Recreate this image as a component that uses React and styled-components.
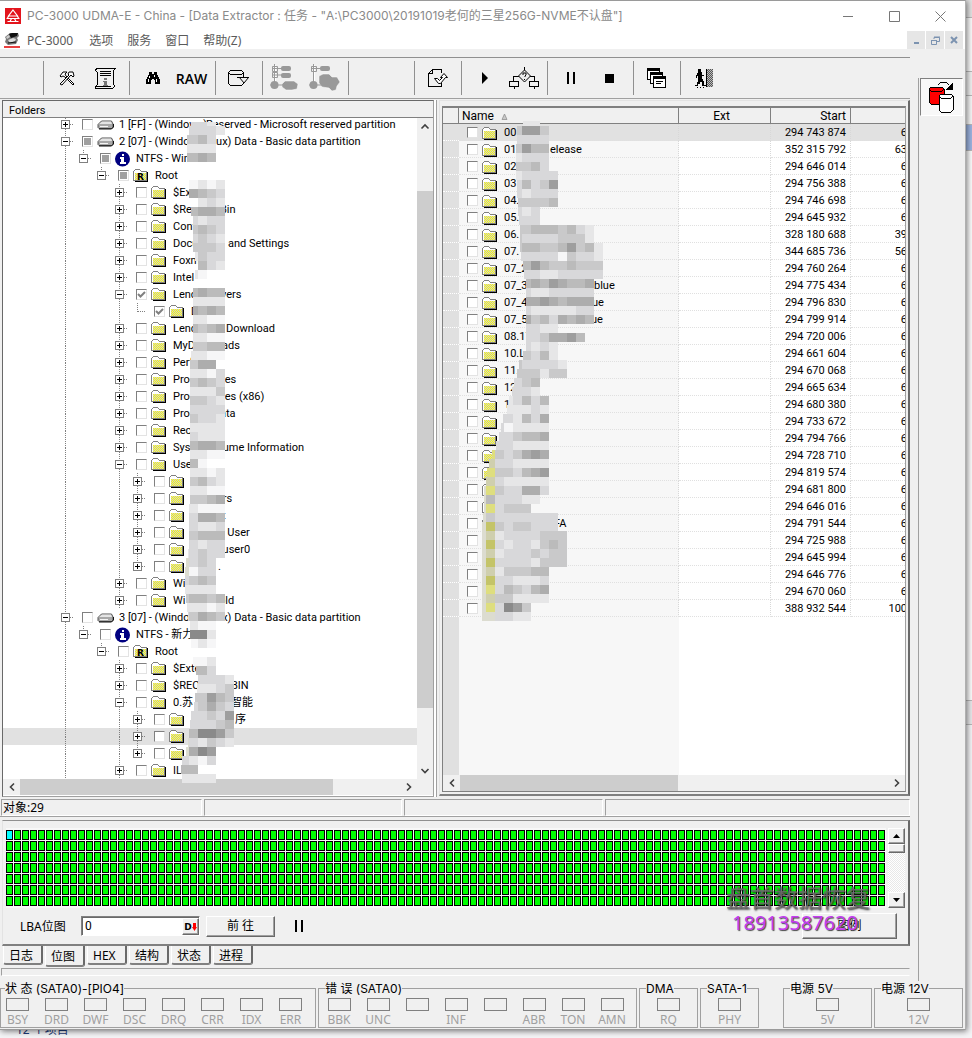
import React from 'react';
import styled, { createGlobalStyle, css } from 'styled-components';

const compact = 'Roboto, "Liberation Sans", "Noto Sans CJK SC", sans-serif';
const ui = '"Noto Sans", "Open Sans", "Noto Sans CJK SC", sans-serif';
const caption = 'Inter, "Open Sans", "Noto Sans CJK SC", sans-serif';

const GlobalStyle = createGlobalStyle`
  * {
    box-sizing: border-box;
  }

  body {
    margin: 0;
    background: #f4f4f6;
    font-family: ${ui};
    font-size: 12px;
    color: #000;
    overflow: hidden;
  }

  button {
    padding: 0;
    border: 0;
    background: none;
    font: inherit;
    color: inherit;
  }

  svg {
    display: block;
    flex-shrink: 0;
  }
`;

/* ---------- window frame ---------- */

const Desktop = styled.div`
  display: grid;
  grid-template-columns: 1fr 6px;
`;

const Window = styled.main`
  display: flex;
  flex-direction: column;
  min-width: 0;
  background: #f0f0f0;
  border-top: 1px solid #9a9a9a;
  border-right: 1px solid #b0b0b0;
  border-bottom: 1px solid #9a9a9a;
  box-shadow: 1px 1px 6px rgba(0, 0, 0, 0.55);
  position: relative;
`;

const Behind = styled.div`
  display: flex;
  flex-direction: column;
`;

const BehindPart = styled.div`
  height: ${(p) => p.$h}px;
  background: ${(p) => p.$color};
  border-bottom: 1px solid #b8b8b8;
`;

const BehindStatus = styled.div`
  grid-column: 1 / 3;
  display: flex;
  align-items: flex-end;
  height: 8px;
  padding-left: 16px;
  overflow: hidden;
  color: #1e3c78;
  line-height: 16px;
`;

const TitleBar = styled.header`
  display: flex;
  align-items: center;
  height: 30px;
  padding: 0 2px 0 5px;
  background: #fff;
  color: #8a8a8a;
`;

const Title = styled.h1`
  flex: 1;
  min-width: 0;
  margin: 0 0 0 6px;
  overflow: hidden;
  font-family: ${caption};
  font-size: 12px;
  font-weight: 400;
  line-height: 18px;
  white-space: nowrap;
`;

const CaptionButton = styled.button`
  display: grid;
  place-items: center;
  width: 46px;
  height: 28px;
`;

const MenuBar = styled.nav`
  display: flex;
  align-items: center;
  gap: 14px;
  height: 18px;
  padding-left: 4px;
  background: #fff;
  color: #5a5a5a;
`;

const AppMenu = styled.div`
  display: flex;
  align-items: center;
  gap: 7px;
  padding-right: 2px;
`;

const MenuItem = styled.button`
  padding-top: 1px;
  line-height: 18px;
`;

const MdiButtons = styled.div`
  display: flex;
  gap: 1px;
  margin-left: auto;
  padding-right: 2px;
`;

const MdiButton = styled.button`
  display: grid;
  place-items: center;
  width: 18px;
  height: 18px;
  background: #e6e6e6;
`;

const Body = styled.div`
  display: flex;
`;

const Main = styled.div`
  flex: 1;
  min-width: 0;
  padding-top: 8px;
`;

const Side = styled.aside`
  width: 55px;
  padding: 29px 2px 0 8px;
`;

const SideBar = styled.div`
  height: 100%;
  padding-left: 1px;
  border-left: 1px solid #a0a0a0;
`;

const SideButton = styled.button`
  display: grid;
  place-items: center;
  width: 43px;
  height: 38px;
  border: 1px solid;
  border-color: #808080 #fff #fff #808080;
  background: #f8f8f8;
`;

/* ---------- toolbar ---------- */

const Toolbar = styled.div`
  display: flex;
  align-items: stretch;
  height: 42px;
  padding: 3px 0;
  border-top: 1px solid #909090;
  border-bottom: 1px solid #a0a0a0;
`;

const ToolGroup = styled.div`
  display: flex;
  flex-shrink: 0;
  padding: 0 4px 0 3px;
  min-width: ${(p) => p.$width || 0}px;
  ${(p) =>
    !p.$plain &&
    css`
      border-left: 1px solid #909090;
    `}
`;

const ToolButton = styled.button`
  display: grid;
  place-items: center;
  width: 39px;
  font-family: 'Open Sans', sans-serif;
  font-size: 14px;
  font-weight: 600;
`;

/* ---------- panels ---------- */

const Panels = styled.div`
  display: flex;
  gap: 5px;
  padding: 1px 0 0 2px;
`;

const FolderPanel = styled.section`
  position: relative;
  flex: 1 1 432px;
  min-width: 0;
  border: 1px solid #696969;
  border-right-color: #a0a0a0;
  border-bottom-color: #a0a0a0;
  box-shadow: 2px 0 0 #fff, 3px 0 0 #a0a0a0;
  background: #fff;
  font-family: ${compact};
`;

const PanelTitle = styled.h2`
  height: 17px;
  margin: 0;
  padding: 2px 0 0 6px;
  border-bottom: 1px solid #808080;
  background: #f0f0f0;
  font-size: 11px;
  font-weight: 400;
  line-height: 15px;
`;

const TreeArea = styled.div`
  display: flex;
  overflow: hidden;
`;

const Tree = styled.ul`
  flex: 1;
  min-width: 0;
  margin: -2px 0 0;
  padding: 0;
  list-style: none;
`;

const TreeRow = styled.li`
  display: flex;
  align-items: center;
  height: 17px;
  padding-left: 54px;
  background: ${(p) => (p.$selected ? '#e1e1e1' : 'transparent')};
  white-space: nowrap;
`;

const Expander = styled.button`
  width: 18px;
  height: 17px;
`;

const Check = styled.input`
  appearance: none;
  flex-shrink: 0;
  width: 11px;
  height: 11px;
  margin: 0 4px 0 7px;
  border: 1px solid;
  border-color: #808080 #e3e3e3 #e3e3e3 #808080;
  background: #fff;

  ${(p) =>
    p.$partial &&
    css`
      background: #a0a0a0;
      box-shadow: inset 0 0 0 1px #fff;
    `}
`;

const TickWrap = styled.span`
  position: relative;
  display: flex;

  svg {
    position: absolute;
    left: 8px;
    top: 1px;
    pointer-events: none;
  }
`;

const ItemName = styled.label`
  display: flex;
  margin-left: 5px;
  font-size: 11px;
  line-height: 17px;
  text-align: left;
`;

const Lead = styled.span`
  flex-shrink: 0;
  width: ${(p) => p.$width}px;
  overflow: hidden;
`;

const Track = styled.div`
  display: flex;
  flex-direction: ${(p) => (p.$vertical ? 'column' : 'row')};
  align-items: stretch;
  width: ${(p) => (p.$vertical ? '16px' : 'auto')};
  height: ${(p) => (p.$vertical ? 'auto' : '16px')};
  padding-right: ${(p) => (p.$corner ? 16 : 0)}px;
  background: #f0f0f0;
`;

const Arrow = styled.button`
  display: grid;
  place-items: center;
  flex: 0 0 17px;
`;

const Thumb = styled.div`
  flex: ${(p) => p.$size} 1 0;
  background: #cdcdcd;
`;

const Rest = styled.div`
  flex: ${(p) => p.$size} 1 0;
`;

const MosaicLayer = styled.svg`
  position: absolute;
  left: ${(p) => p.$left}px;
  top: ${(p) => p.$top}px;
  pointer-events: none;
`;

const FilePanel = styled.section`
  position: relative;
  flex: 1 1 471px;
  min-width: 0;
  padding: 5px 2px 2px 2px;
  border: 1px solid #e3e3e3;
  border-right: 2px solid #696969;
  border-bottom: 2px solid #808080;
  margin-bottom: 1px;
  font-family: ${compact};
`;

const FileFrame = styled.div`
  border: 1px solid #808080;
  border-right-color: #a0a0a0;
  border-top-width: 2px;
  overflow: hidden;
  background: #fff;
`;

const FileTable = styled.table`
  width: calc(100% + 2px);
  table-layout: fixed;
  border-collapse: separate;
  border-spacing: 0;
  font-size: 12px;
`;

const HeadCell = styled.th`
  height: 16px;
  padding: 1px ${(p) => (p.$align === 'left' ? 3 : 4)}px 0;
  border-right: 1px solid #808080;
  border-bottom: 1px solid #808080;
  background: #f0f0f0;
  font-weight: 400;
  line-height: 14px;
  text-align: ${(p) => p.$align};

  &:nth-child(3) {
    padding-right: 10px;
  }

  &:last-child {
    border-right: 0;
  }
`;

const SortLabel = styled.span`
  display: flex;
  align-items: center;
  gap: 7px;
`;

const Cell = styled.td`
  height: 17px;
  padding: 1px 4px 0 0;
  border-right: 1px dotted #d8d8d8;
  border-bottom: 1px dotted #e0e0e0;
  font-size: 11px;
  line-height: 15px;
  text-align: right;
  white-space: nowrap;
  overflow: hidden;

  &:first-child {
    background: #e0e0e0;
    border-right: 0;
    border-bottom-color: #fff;
  }

  &:nth-child(2) {
    background: #f7f7f7;
  }

  &:last-child {
    padding-right: 0;
    border-right: 0;
  }
`;

const FileRow = styled.tr`
  ${(p) =>
    p.$selected &&
    css`
      && ${Cell} {
        background: #e1e1e1;
      }
    `}
`;

const FillRow = styled.tr`
  ${Cell} {
    height: 158px;
    border: 0;
  }
`;

const NameLine = styled.div`
  display: flex;
  align-items: center;
  height: 15px;
  padding-left: 1px;

  svg {
    margin-top: 1px;
  }
`;

/* ---------- bottom part ---------- */

const StatusBar = styled.div`
  display: flex;
  gap: 2px;
  margin-top: 2px;
  padding-left: 1px;
  border-bottom: 1px solid #a0a0a0;
`;

const StatusCell = styled.div`
  flex: ${(p) => p.$size} 1 0;
  height: 17px;
  padding-left: 1px;
  border: 1px solid;
  border-color: #a0a0a0 #fff #fff #a0a0a0;
  line-height: 15px;
`;

const MapPanel = styled.section`
  position: relative;
  margin: 3px 0 0 2px;
  padding: 7px 3px 0 3px;
  border: 1px solid #e3e3e3;
  border-top-color: #909090;
  border-right: 2px solid #696969;
  border-bottom: 2px solid #808080;
`;

const MapRow = styled.div`
  display: flex;
  gap: 2px;
`;

const MapArea = styled.div`
  flex: 1;
  min-width: 0;
  padding: 2px 0 1px;
  background: #f8f8f8;
`;

const MapScroll = styled.div`
  display: flex;
  flex-direction: column;
  width: 17px;
  background: repeating-conic-gradient(#fff 0% 25%, #e8e8e8 0% 50%) 0 0 / 2px 2px;
`;

const raised = css`
  border: 1px solid;
  border-color: #fff #696969 #696969 #fff;
  box-shadow: inset -1px -1px 0 #a0a0a0;
  background: #f0f0f0;
`;

const MapScrollButton = styled.button`
  && {
    ${raised}
  }
  display: grid;
  place-items: center;
  height: 16px;
`;

const MapScrollThumb = styled.div`
  ${raised}
  height: 9px;
  margin-bottom: auto;
`;

const Controls = styled.form`
  display: flex;
  align-items: center;
  height: 36px;
  padding: 0 8px 0 14px;
`;

const LbaLabel = styled.label`
  width: 61px;
`;

const LbaField = styled.div`
  display: flex;
  width: 119px;
  height: 20px;
  border: 1px solid;
  border-color: #808080 #fff #fff #808080;
  box-shadow: inset 1px 1px 0 #696969;
  background: #fff;
`;

const LbaInput = styled.input`
  flex: 1;
  min-width: 0;
  padding: 0 0 0 3px;
  border: 0;
  background: none;
  font: 12px ${compact};
`;

const DecButton = styled.button`
  && {
    ${raised}
  }
  display: flex;
  align-items: center;
  justify-content: center;
  width: 17px;
  margin: 1px 0 0;
  font: 700 9px 'DejaVu Sans', sans-serif;
`;

const PushButton = styled.button`
  && {
    ${raised}
  }
  width: ${(p) => p.$width}px;
  height: ${(p) => p.$height}px;
  margin-left: ${(p) => (p.$right ? 'auto' : '6px')};
  line-height: 16px;
`;

const PauseButton = styled.button`
  margin-left: 20px;
`;

const Watermark = styled.div`
  position: absolute;
  right: 36px;
  bottom: 10px;
  width: 146px;
  pointer-events: none;
`;

const WatermarkName = styled.div`
  color: rgba(110, 110, 110, 0.85);
  font-size: 24px;
  line-height: 28px;
  text-shadow: 1px 1px 2px #222;
  white-space: nowrap;
`;

const WatermarkPhone = styled.div`
  padding-left: 6px;
  color: #c43cf0;
  font-size: 20px;
  line-height: 22px;
  text-shadow: 1px 1px 1px #444;
`;

const Tabs = styled.div`
  display: flex;
  align-items: flex-start;
  gap: 2px;
  height: 22px;
  padding-left: 3px;
`;

const Tab = styled.button`
  width: 40px;
  height: ${(p) => (p.$active ? 21 : 19)}px;
  padding: ${(p) => (p.$active ? 2 : 1)}px 6px 0 5px;
  border-left: 1px solid #fff;
  border-right: 2px solid #696969;
  border-bottom: 2px solid #808080;
  border-radius: 0 0 3px 3px;
  background: #f0f0f0;
  line-height: 18px;
  text-align: left;
  white-space: nowrap;

  && {
    border-top: 0;
  }
`;

const TabFoot = styled.div`
  height: 8px;
  margin: 0 0 5px 1px;
  border: 1px solid;
  border-color: #a0a0a0 transparent #fff #a0a0a0;
`;

const Indicators = styled.footer`
  display: flex;
  gap: 2px;
  padding: 0 2px 1px 0;
`;

const Group = styled.fieldset`
  flex: ${(p) => p.$width} 1 ${(p) => p.$width}px;
  min-width: 0;
  margin: 0 0 0 ${(p) => p.$space || 0}px;
  padding: 2px ${(p) => p.$end || 0}px 0 0;
  border: 1px solid #a0a0a0;

  legend {
    margin-left: ${(p) => p.$indent || 6}px;
    padding: 0;
    font-family: ${caption};
    line-height: 15px;
  }
`;

const Lamps = styled.div`
  display: flex;
  justify-content: center;
`;

const Lamp = styled.div`
  display: flex;
  flex: 0 0 39px;
  flex-direction: column;
  align-items: center;
  height: 29px;
  color: #a0a0a0;
  line-height: 16px;

  &:before {
    content: '';
    flex: 0 0 11px;
    width: 21px;
    margin-bottom: 1px;
    border: 1px solid #808080;
  }
`;

/* ---------- icons ---------- */

const Defs = () => (
  <svg width="0" height="0" style={{ position: 'absolute' }} aria-hidden="true">
    <defs>
      <pattern id="dither" width="2" height="2" patternUnits="userSpaceOnUse">
        <rect width="2" height="2" fill="#ffff00" />
        <rect width="1" height="1" fill="#c8c8e0" />
        <rect x="1" y="1" width="1" height="1" fill="#c8c8e0" />
      </pattern>
      <pattern id="grain" width="2" height="2" patternUnits="userSpaceOnUse">
        <rect width="1" height="1" fill="#555" />
        <rect x="1" y="1" width="1" height="1" fill="#555" />
      </pattern>
      <pattern id="sector" width="8" height="11" patternUnits="userSpaceOnUse">
        <rect width="7" height="10" fill="#000" />
        <rect x="1" y="1" width="5" height="8" fill="#00ff00" />
      </pattern>
    </defs>
  </svg>
);

const FolderIcon = ({ root }) => (
  <svg width="17" height="15" viewBox="0 0 17 15" shapeRendering="crispEdges">
    <path d="M2 13h12V4h1v10H2z" fill="#000" />
    <path d="M0 3h1V2h1V1h5v1h1v1h6v10H0z" fill="#808080" />
    <path d="M1 3h1V2h5v1h1v1h5v1H1z" fill="#fff" />
    <rect x="1" y="4" width="12" height="8" fill="url(#dither)" />
    <path d="M1 4h12v1H2v7H1z" fill="#fff" />
    {root && (
      <text x="4" y="12" fontSize="9" fontWeight="700" fontFamily="DejaVu Sans, sans-serif">
        R
      </text>
    )}
  </svg>
);

const DriveIcon = () => (
  <svg width="17" height="13" viewBox="0 0 17 13">
    <path d="M1 6.500L4.500 3h10l1.500 3v3l-1 1.500H2L1 9.500z" fill="#a8a8a8" stroke="#555" />
    <path d="M2 6l3-2.500h9L15 6z" fill="#e4e4e4" />
    <path d="M3 8.500h8" stroke="#f4f4f4" />
    <path d="M2 11h12.500l2-2V6" stroke="#111" fill="none" />
  </svg>
);

const InfoIcon = () => (
  <svg width="16" height="16" viewBox="0 0 16 16">
    <circle cx="7.500" cy="8" r="7.500" fill="#000080" />
    <path d="M7 3h2v2H7zM5 6h4v5h2v2H5v-2h1V8H5z" fill="#fff" />
  </svg>
);

const ArrowIcon = ({ dir }) => {
  const d = {
    up: 'M2.500 7.500L6 4l3.500 3.500',
    down: 'M2.500 4L6 7.500 9.500 4',
    left: 'M8 2.500L4.500 6 8 9.500',
    right: 'M4 2.500L7.500 6 4 9.500',
  }[dir];
  return (
    <svg width="12" height="12" viewBox="0 0 12 12">
      <path d={d} fill="none" stroke="#404040" strokeWidth="1.600" />
    </svg>
  );
};

const Logo = () => (
  <svg width="16" height="16" viewBox="0 0 16 16">
    <rect width="16" height="16" fill="#e3141c" />
    <path d="M8 2l4.500 6h-9zM1.500 10.500h13M4 8l-2 2.500M12 8l2 2.500M2.500 13.500h11M6.500 10.500L5 13.500M9.500 10.500l1.500 3" fill="none" stroke="#fff" strokeWidth="1.200" />
  </svg>
);

const DiskLogo = () => (
  <svg width="16" height="16" viewBox="0 0 16 16">
    <path d="M1 5l5-4h8l1 3-2 2 1 2-2 4-8 1-3-3 1-3z" fill="#777" />
    <path d="M5 2l3-1h6l-1 3-6 2-1-2z" fill="#111" />
    <path d="M2 5l3-2 1 2-3 2z" fill="#ccc" />
    <path d="M4 8l5-2 3 1-1 2-5 2z" fill="#ddd" />
    <path d="M4 11l8-1" stroke="#111" />
    <path d="M0 15h16" stroke="#e00000" strokeWidth="1.500" />
  </svg>
);

const line = { fill: 'none', stroke: '#000', shapeRendering: 'crispEdges' };

const ToolsIcon = () => (
  <svg width="16" height="15" viewBox="0 0 16 15">
    <path d="M1 5l3-4 4 0-2 2 1 2 8 8-1 1-8-8-2-1-2 1z" fill="#fff" stroke="#000" />
    <path d="M10 1l4 0 1 4-1 1-2-2-1 1-8 9-2-1 9-9-1-1z" fill="#fff" stroke="#000" />
  </svg>
);

const ScrollIcon = () => (
  <svg width="23" height="23" viewBox="0 0 23 23">
    <path {...line} d="M3.500 1.500h18l-2 2v13l1 3-2 2h-17v-2l2-2v-12l-2-2v-1zM6 4.500h11M6 6.500h11M6 8.500h11M2 19.500h15" />
    <path d="M10 11h3v2h-3zM9 14h4v4h1v1H9v-1h1v-3H9z" fill="#777" />
  </svg>
);

const BinocularsIcon = () => (
  <svg width="16" height="14" viewBox="0 0 16 14" shapeRendering="crispEdges">
    <path d="M4 1h3v2h2V1h3v2l1 2 2 4v4h-5V9H9V8H7v1H6v4H1V9l2-4 1-2z" />
    <path d="M4 5h1v2H4zM3 8h1v3H3zM9 4h1v2H9zM11 8h1v3h-1z" fill="#fff" />
  </svg>
);

const CylinderIcon = () => (
  <svg width="23" height="18" viewBox="0 0 23 18">
    <path {...line} d="M16.500 8V3.500l-2-2h-11l-2 2v11l2 2h11l2-2M1.500 3.500l2 2h11l2-2M10 8.500h3M19 8.500h3" />
    <path d="M12.500 8.500h9L17 14z" fill="#f0f0f0" stroke="#000" />
  </svg>
);

const TreeMapIcon = ({ blob }) => (
  <svg width="34" height="28" viewBox="0 0 34 28">
    <path d="M6.500 1v20" stroke="#fff" />
    <path d="M5.500 0v20M3 4.500h11M3.500 7.500h5v-5h-5z" stroke="#999" fill="none" />
    <rect x="12" y="2" width="10" height="5" rx="2" fill="#999" />
    {!blob && <path d="M3.500 13.500h5v-5h-5zM3 11h11" stroke="#999" fill="none" />}
    {!blob && <rect x="12" y="9" width="10" height="5" rx="2" fill="#999" />}
    {!blob && <path d="M13 20l3-3h9l4 3-1 5-5 1h-6l-4-3z" fill="#999" stroke="#fff" strokeWidth="0.500" />}
    {blob && <path d="M11 12l4-2 6 0 3 3 5 0 3 5-3 4-1 4-4 1-3-3-7-1-3-4z" fill="#999" stroke="#fff" strokeWidth="0.500" />}
    <path d="M1 21h14" stroke="#999" />
    <circle cx="5.500" cy="21" r="4" fill="#999" />
  </svg>
);

const ExportIcon = () => (
  <svg width="21" height="20" viewBox="0 0 21 20">
    <path {...line} d="M14.500 5V1.500h-9l-4 4v13h13V15M5.500 1.500v4h-4" />
    <path d="M7.500 10.500h3l2 2 3-3h-2l3.500-4 3.500 4h-2l-5 6h-2z" fill="#fff" stroke="#000" />
  </svg>
);

const FlowIcon = () => (
  <svg width="32" height="22" viewBox="0 0 32 22">
    <path {...line} d="M16.500 0v3M12 9.500H5.500V15M20 9.500h6.500V15M1.500 14.500h9v5h-9zM21.500 14.500h9v5h-9zM6.500 20v2M26.500 20v2" />
    <path d="M16.500 3l6 6-6 6-6-6z" fill="#eee" stroke="#000" />
    <path d="M15 8V6h3v2l-1 1v1M16.500 12v1" fill="none" stroke="#000" />
  </svg>
);

const WindowsIcon = () => (
  <svg width="20" height="21" viewBox="0 0 20 21" shapeRendering="crispEdges">
    {[0, 1, 2].map((n) => (
      <g key={n} transform={`translate(${n * 3} ${n * 4})`}>
        <path d="M.5 .5h12v11H.5z" fill="#fff" stroke="#000" />
        <path d="M1 1.500h11" stroke="#000" strokeWidth="2" />
        <path d="M3 5.500h7M3 7.500h5" stroke="#000" />
      </g>
    ))}
  </svg>
);

const ExitIcon = () => (
  <svg width="20" height="19" viewBox="0 0 20 19" shapeRendering="crispEdges">
    <path d="M4 0h3v3h1v3h2v1h-2v3h1v2h1v4h2v1h-4v-4H6v2H4v2H1v-1h2v-3h1V7H3v2H2V6h1V4h1z" />
    <path d="M3 18h1M6 18h1M9 18h1" stroke="#000" />
    <rect x="13" width="6" height="18" fill="#bbb" />
    <rect x="13" width="6" height="18" fill="url(#grain)" />
    <path d="M12.500 0v18" stroke="#000" />
  </svg>
);

const CopyDiskIcon = () => (
  <svg width="27" height="33" viewBox="0 0 27 33" shapeRendering="crispEdges">
    <path d="M1 8l2-2h11l2 2v13l-2 2H3l-2-2z" fill="#f00" stroke="#000" />
    <path d="M1 8l2 2h11l2-2" fill="none" stroke="#000" />
    <path d="M11 15l2-2h10l2 2v14l-2 2H13l-2-2z" fill="#fff" stroke="#000" />
    <path d="M11 15l2 2h10l2-2" fill="none" stroke="#000" />
    <path d="M10 4l3-3h5l3 3" fill="none" stroke="#000" />
    <path d="M25 1v8h-8z" />
  </svg>
);

const PauseIcon = () => (
  <svg width="8" height="12" viewBox="0 0 8 12">
    <path d="M0 0h2v12H0zM6 0h2v12H6z" />
  </svg>
);

const Tick = () => (
  <svg width="9" height="9" viewBox="0 0 9 9">
    <path d="M1 4l2.500 2.500L8 2" fill="none" stroke="#808080" strokeWidth="2" />
  </svg>
);

const Branch = ({ sign, top, bottom }) => (
  <svg width="18" height="17" viewBox="0 0 18 17" shapeRendering="crispEdges">
    <g stroke="#808080" fill="none" strokeDasharray="1 1">
      {top && <path d="M8.500 0v9" />}
      {bottom && <path d="M8.500 9v8" />}
      {sign && <path d="M9 8.500h8" />}
    </g>
    {(sign === '+' || sign === '-') && <rect x="4.500" y="4.500" width="8" height="8" fill="#fff" stroke="#808080" />}
    {(sign === '+' || sign === '-') && <path d="M6 8.500h5" stroke="#000" />}
    {sign === '+' && <path d="M8.500 6v5" stroke="#000" />}
  </svg>
);

/* ---------- data ---------- */

// level, sign, visible start, [offset of visible end, visible end], extra flags
const tree = [
  [0, '+', '1 [FF] - (Windows)', 87, 'Reserved - Microsoft reserved partition'],
  [0, '-', '2 [07] - (Windo', 91, 'nux) Data - Basic data partition', { check: 'partial' }],
  [1, '-', 'NTFS - Win', 0, '', { check: 'partial' }],
  [2, '-', 'Root', 0, '', { check: 'partial' }],
  [3, '+', '$Ext'],
  [3, '+', '$Rec', 47, 'Bin'],
  [3, '+', 'Conf'],
  [3, '+', 'Docu', 55, 'and Settings'],
  [3, '+', 'Foxm'],
  [3, '+', 'Intel'],
  [3, '-', 'Lenc', 48, 'vers', { check: 'on' }],
  [4, 'end', 'D', 0, '', { check: 'on' }],
  [3, '+', 'Lenc', 53, 'Download'],
  [3, '+', 'MyD', 49, 'ads'],
  [3, '+', 'Perf'],
  [3, '+', 'Prog', 49, 'les'],
  [3, '+', 'Prog', 49, 'les (x86)'],
  [3, '+', 'Prog', 47, 'ata'],
  [3, '+', 'Rec'],
  [3, '+', 'Syst', 47, 'lume Information'],
  [3, '-', 'Use'],
  [4, '+', ''],
  [4, '+', '', 26, 'ers'],
  [4, '+', '', 31, 't'],
  [4, '+', '', 30, 't User'],
  [4, '+', '', 28, 'tuser0'],
  [4, '+', '', 27, '.', { last: true }],
  [3, '+', 'Wi'],
  [3, '+', 'Wi', 46, 'old'],
  [0, '-', '3 [07] - (Windo', 91, 'nux) Data - Basic data partition'],
  [1, '-', 'NTFS - 新力'],
  [2, '-', 'Root'],
  [3, '+', '$Exte'],
  [3, '+', '$REC', 58, 'BIN'],
  [3, '-', '0.苏', 58, '智能'],
  [4, '+', '', 44, '序'],
  [4, '+', '', 0, '', { selected: true }],
  [4, '+', '', 0, '', { last: true }],
  [3, '+', 'IL'],
];

const files = [
  ['00', 0, '', '294 743 874', '6'],
  ['01', 46, 'elease', '352 315 792', '63'],
  ['02', 0, '', '294 646 014', '6'],
  ['03', 0, '', '294 756 388', '6'],
  ['04.', 0, '', '294 746 698', '6'],
  ['05.', 0, '', '294 645 932', '6'],
  ['06.', 0, '', '328 180 688', '39'],
  ['07.', 0, '', '344 685 736', '56'],
  ['07_2', 92, 'e', '294 760 264', '6'],
  ['07_3', 90, 'blue', '294 775 434', '6'],
  ['07_4', 88, 'ue', '294 796 830', '6'],
  ['07_5', 87, 'ue', '294 799 914', '6'],
  ['08.17', 0, '', '294 720 006', '6'],
  ['10.L', 0, '', '294 661 604', '6'],
  ['11.', 0, '', '294 670 068', '6'],
  ['12', 0, '', '294 665 634', '6'],
  ['1', 0, '', '294 680 380', '6'],
  ['', 0, '', '294 733 672', '6'],
  ['', 0, '', '294 794 766', '6'],
  ['', 0, '', '294 728 710', '6'],
  ['', 14, '1', '294 819 574', '6'],
  ['', 14, '.', '294 681 800', '6'],
  ['', 0, '', '294 646 016', '6'],
  ['', 50, 'FA', '294 791 544', '6'],
  ['', 0, '', '294 725 988', '6'],
  ['', 0, '', '294 645 994', '6'],
  ['', 0, '', '294 646 776', '6'],
  ['', 0, '', '294 670 060', '6'],
  ['', 16, 'y', '388 932 544', '100'],
];

// pixelated strips: y, start x, shade of every 9px cell
const treeMosaic = [
  [122, 191, 'dde'], [126, 189, 'ddde'], [135, 187, 'ccbd'], [144, 187, 'eeee'], [153, 187, 'bbab'],
  [180, 189, 'fefe'], [189, 189, 'abcd'], [198, 198, 'ede'], [207, 191, 'baab'], [216, 193, 'dedd'],
  [225, 193, 'cbcd'], [234, 193, 'dcde'], [243, 193, 'cccd'], [252, 195, 'ecdd'], [261, 198, 'bde'], [270, 195, 'ef'],
  [288, 193, 'babb'], [297, 193, 'eeee'], [306, 193, 'abab'], [315, 193, 'eeff'], [324, 193, 'bcba'],
  [333, 193, 'eeff'], [342, 193, 'ccbb'], [351, 191, 'eeff'], [360, 190, 'caa'], [369, 190, 'eefd'],
  [378, 190, 'cbcd'], [387, 190, 'eeec'], [396, 190, 'ccde'], [405, 190, 'dddd'], [414, 190, 'cdde'],
  [423, 190, 'eeee'], [432, 190, 'deee'], [441, 190, 'baab'], [450, 190, 'eeff'], [459, 190, 'bf'],
  [468, 190, 'eefe'], [477, 190, 'cbde'], [486, 190, 'eeff'], [495, 190, 'ccba'], [504, 189, 'efff'],
  [513, 189, 'daab'], [522, 189, 'deed'], [531, 189, 'cbbb'], [540, 189, 'dedd'], [549, 188, 'edcdd'],
  [558, 186, 'gdcd'], [567, 185, 'gfdd'], [576, 185, 'dcbc'], [585, 185, 'eeee'], [594, 186, 'cbbcb'],
  [603, 187, 'eeefe'], [612, 188, 'dcabc'], [621, 190, 'eff'], [630, 190, '88e'], [639, 191, 'fef'],
  [657, 193, 'ffe'], [666, 196, 'bbd'], [675, 198, 'ddde'], [684, 197, 'eeedc'], [693, 195, 'cc9bc'],
  [702, 194, 'dcacd'], [711, 191, 'ddcd9'], [720, 190, 'dddcb'], [729, 189, 'b889c'], [738, 188, 'gdecde'],
  [747, 186, 'ga89'], [756, 182, 'defd'], [765, 181, 'bb'], [774, 182, 'eeee'],
];

const fileMosaic = [
  [121, 523, 'ee'], [126, 517, 'c99c'], [135, 517, 'dddd'], [144, 516, 'c9bb'], [153, 516, 'eddd'],
  [162, 516, 'ccbd'], [171, 516, 'edddd'], [180, 517, 'dbdc9'], [189, 517, 'deddd'], [198, 518, 'ccccb'],
  [207, 518, 'ded'], [216, 519, 'ddd'], [225, 520, 'ccbbbcbde'], [234, 520, 'cddddccce'], [243, 520, 'cbbccb9cbe'],
  [252, 521, 'dddddfcdde'], [261, 523, 'b9bccbccc'], [270, 524, 'ddeeddddd'], [279, 526, 'bab9abba'],
  [288, 526, 'deeddddd'], [297, 526, 'aa9abaaa'], [306, 526, 'deeeeedd'], [315, 526, 'acbdabab'],
  [324, 526, 'ddee'], [333, 526, 'ddcaa9b'], [342, 526, 'dede'], [351, 523, 'cdbe'], [360, 519, 'cdddde'],
  [369, 517, 'cccecc'], [378, 514, 'dcb'], [387, 512, 'ddde'], [396, 509, 'edbdb'], [405, 507, 'eeede'],
  [414, 503, 'ddebda'], [423, 501, 'dfeeee'], [432, 499, 'ddcbba'], [441, 496, 'ddeeee'], [450, 492, 'ycdca9a'],
  [459, 489, 'oddeeee'], [468, 487, 'yccdba9'], [477, 486, 'odeeeee'], [486, 484, 'gycddaad'], [495, 484, 'gbdddee'],
  [504, 484, 'gydccc'], [513, 483, 'gcddddddd'], [522, 482, 'gkcdccddd'], [531, 482, 'goeddddccc'],
  [540, 482, 'gkdeddecbc'], [549, 482, 'goedddcdcc'], [558, 482, 'gkddddeccc'], [567, 482, 'goecccbb'],
  [576, 482, 'gkddeeed'], [585, 482, 'gydbcdba'], [594, 482, 'gocceeee'], [603, 482, 'gyd89c'], [612, 482, 'ggddee'],
];

const shades = {
  8: '#8a8a8a', 9: '#9e9e9e', a: '#adadad', b: '#bbbbbb', c: '#c9c9ca', d: '#d8d8da', e: '#e6e6e7', f: '#f6f6f7',
  y: '#dede7e', o: '#cfcfae', k: '#c4c468', g: '#dcdcd0',
};

const Mosaic = ({ rows, left, top, ...rest }) => (
  <MosaicLayer width="140" height="700" shapeRendering="crispEdges" {...rest}>
    {rows.map(([y, x, cells]) =>
      cells.split('').map((c, i) => {
        const x1 = i === 0 ? x : (Math.floor(x / 9) + i) * 9;
        const x2 = (Math.floor(x / 9) + i + 1) * 9;
        const y2 = (Math.floor(y / 9) + 1) * 9;
        return <rect key={`${y}-${i}`} x={x1 - left} y={y - top} width={x2 - x1} height={y2 - y} fill={shades[c]} />;
      })
    )}
  </MosaicLayer>
);

const rowIcon = (level) => {
  if (level === 0) return <DriveIcon />;
  if (level === 1) return <InfoIcon />;
  return <FolderIcon root={level === 2} />;
};

const PartialName = ({ id, start, at, end }) => (
  <ItemName htmlFor={id}>
    {at ? <Lead $width={at}>{start}</Lead> : start}
    {end}
  </ItemName>
);

const ScrollBar = ({ vertical, corner, before, thumb, after }) => (
  <Track $vertical={vertical} $corner={corner}>
    <Arrow aria-label={vertical ? 'Up' : 'Left'}>
      <ArrowIcon dir={vertical ? 'up' : 'left'} />
    </Arrow>
    <Rest $size={before} />
    <Thumb $size={thumb} />
    <Rest $size={after} />
    <Arrow aria-label={vertical ? 'Down' : 'Right'}>
      <ArrowIcon dir={vertical ? 'down' : 'right'} />
    </Arrow>
  </Track>
);

const FolderTree = () => (
  <FolderPanel>
    <PanelTitle>Folders</PanelTitle>
    <TreeArea>
      <Tree>
        {tree.map(([level, sign, start, at, end, extra = {}], i) => (
          <TreeRow key={i} $selected={extra.selected}>
            {Array.from({ length: level }, (_, l) => (
              <Branch key={l} top={l === 0 || l === 3} bottom={l === 0 || l === 3} />
            ))}
            {sign === 'end' ? (
              <Branch sign="end" top />
            ) : (
              <Expander aria-label="Toggle">
                <Branch sign={sign} top bottom={level !== 1 && level !== 2 && !extra.last} />
              </Expander>
            )}
            <TickWrap>
              <Check
                type="checkbox"
                id={`folder-${i}`}
                aria-label={start || 'Folder'}
                defaultChecked={extra.check === 'on'}
                $partial={extra.check === 'partial'}
              />
              {extra.check === 'on' && <Tick />}
            </TickWrap>
            {rowIcon(level)}
            <PartialName id={`folder-${i}`} start={start} at={at} end={end} />
          </TreeRow>
        ))}
      </Tree>
      <ScrollBar vertical before={56} thumb={516} after={54} />
    </TreeArea>
    <ScrollBar corner before={0} thumb={312} after={67} />
    <Mosaic rows={treeMosaic} left={180} top={110} $left={177} $top={9} />
  </FolderPanel>
);

const FileList = () => (
  <FilePanel>
    <FileFrame>
      <FileTable>
        <colgroup>
          <col style={{ width: 16 }} />
          <col />
          <col style={{ width: 92 }} />
          <col style={{ width: 80 }} />
          <col style={{ width: 56 }} />
        </colgroup>
        <thead>
          <tr>
            <HeadCell aria-label="Row" />
            <HeadCell $align="left">
              <SortLabel>
                Name
                <svg width="7" height="7" viewBox="0 0 7 7">
                  <path d="M3.500 1L6 6.500H1z" fill="#c8c8c8" stroke="#909090" strokeWidth="0.800" />
                </svg>
              </SortLabel>
            </HeadCell>
            <HeadCell $align="center">Ext</HeadCell>
            <HeadCell $align="right">Start</HeadCell>
            <HeadCell aria-label="Size" />
          </tr>
        </thead>
        <tbody>
          {files.map(([start, at, end, lba, size], i) => (
            <FileRow key={lba} $selected={i === 0}>
              <Cell />
              <Cell>
                <NameLine>
                  <Check type="checkbox" id={`file-${i}`} aria-label={start || 'File'} />
                  <FolderIcon />
                  <PartialName id={`file-${i}`} start={start} at={at} end={end} />
                </NameLine>
              </Cell>
              <Cell />
              <Cell>{lba}</Cell>
              <Cell>{size}</Cell>
            </FileRow>
          ))}
          <FillRow>
            <Cell />
            <Cell />
            <Cell />
            <Cell />
            <Cell />
          </FillRow>
        </tbody>
      </FileTable>
      <ScrollBar before={0} thumb={218} after={210} />
    </FileFrame>
    <Mosaic rows={fileMosaic} left={480} top={110} $left={40} $top={9} />
  </FilePanel>
);

const SectorMap = () => (
  <MapPanel>
    <MapRow>
      <MapArea>
        <svg width="100%" height="77">
          <rect width="100%" height="77" fill="url(#sector)" />
          <rect x="1" y="1" width="5" height="8" fill="#00ffff" />
        </svg>
      </MapArea>
      <MapScroll>
        <MapScrollButton aria-label="Up">
          <svg width="7" height="4" viewBox="0 0 7 4">
            <path d="M3.500 0L7 4H0z" />
          </svg>
        </MapScrollButton>
        <MapScrollThumb />
        <MapScrollButton aria-label="Down">
          <svg width="7" height="4" viewBox="0 0 7 4">
            <path d="M0 0h7L3.500 4z" />
          </svg>
        </MapScrollButton>
      </MapScroll>
    </MapRow>
    <Controls onSubmit={(e) => e.preventDefault()}>
      <LbaLabel htmlFor="lba">LBA位图</LbaLabel>
      <LbaField>
        <LbaInput id="lba" defaultValue="0" />
        <DecButton type="button">
          D
          <svg width="5" height="8" viewBox="0 0 5 8">
            <path d="M1 0h3v4h1L2.500 8 0 4h1z" fill="#f00" />
          </svg>
        </DecButton>
      </LbaField>
      <PushButton $width={69} $height={21}>
        前 往
      </PushButton>
      <PauseButton type="button" aria-label="Pause">
        <PauseIcon />
      </PauseButton>
      <PushButton type="button" $width={95} $height={26} $right>
        图例
      </PushButton>
    </Controls>
    <Watermark>
      <WatermarkName>盘首数据恢复</WatermarkName>
      <WatermarkPhone>18913587620</WatermarkPhone>
    </Watermark>
  </MapPanel>
);

const lampGroups = [
  { title: '状 态 (SATA0)-[PIO4]', lamps: ['BSY', 'DRD', 'DWF', 'DSC', 'DRQ', 'CRR', 'IDX', 'ERR'], width: 316, indent: 4, end: 8 },
  { title: '错 误 (SATA0)', lamps: ['BBK', 'UNC', '', 'INF', '', 'ABR', 'TON', 'AMN'], width: 319, end: 4 },
  { title: 'DMA', lamps: ['RQ'], width: 59 },
  { title: 'SATA-1', lamps: ['PHY'], width: 59 },
  { title: '电源 5V', lamps: ['5V'], width: 89, space: 22 },
  { title: '电源 12V', lamps: ['12V'], width: 89 },
];

const App = () => (
  <>
    <GlobalStyle />
    <Defs />
    <Desktop>
      <Window>
        <TitleBar>
          <Logo />
          <Title>PC-3000 UDMA-E - China - [Data Extractor : 任务 - "A:\PC3000\20191019老何的三星256G-NVME不认盘"]</Title>
          <CaptionButton aria-label="Minimize">
            <svg width="10" height="10" viewBox="0 0 10 10">
              <path d="M0 5.500h10" stroke="#777" />
            </svg>
          </CaptionButton>
          <CaptionButton aria-label="Maximize">
            <svg width="11" height="11" viewBox="0 0 11 11">
              <path d="M.5 .5h10v10H.5z" fill="none" stroke="#777" />
            </svg>
          </CaptionButton>
          <CaptionButton aria-label="Close">
            <svg width="11" height="11" viewBox="0 0 11 11">
              <path d="M.5 .5l10 10M10.500 .5l-10 10" stroke="#777" />
            </svg>
          </CaptionButton>
        </TitleBar>
        <MenuBar>
          <AppMenu>
            <DiskLogo />
            <MenuItem>PC-3000</MenuItem>
          </AppMenu>
          <MenuItem>选项</MenuItem>
          <MenuItem>服务</MenuItem>
          <MenuItem>窗口</MenuItem>
          <MenuItem>帮助(Z)</MenuItem>
          <MdiButtons>
            <MdiButton aria-label="Minimize document">
              <svg width="9" height="9" viewBox="0 0 9 9">
                <path d="M2 7h5" stroke="#7c93b0" strokeWidth="2" />
              </svg>
            </MdiButton>
            <MdiButton aria-label="Restore document">
              <svg width="9" height="9" viewBox="0 0 9 9">
                <path d="M3 3V1.500h5.500v4H6M.5 4.500h5v4h-5zM3 1h6M0 4.500h6" fill="none" stroke="#7c93b0" />
              </svg>
            </MdiButton>
            <MdiButton aria-label="Close document">
              <svg width="8" height="8" viewBox="0 0 8 8">
                <path d="M1 1l6 6M7 1L1 7" stroke="#7c93b0" strokeWidth="2" />
              </svg>
            </MdiButton>
          </MdiButtons>
        </MenuBar>
        <Body>
          <Main>
            <Toolbar>
              <ToolGroup $plain $width={43} />
              <ToolGroup>
                <ToolButton aria-label="Tools"><ToolsIcon /></ToolButton>
                <ToolButton aria-label="Report"><ScrollIcon /></ToolButton>
              </ToolGroup>
              <ToolGroup>
                <ToolButton aria-label="Find"><BinocularsIcon /></ToolButton>
                <ToolButton>RAW</ToolButton>
              </ToolGroup>
              <ToolGroup>
                <ToolButton aria-label="Partition"><CylinderIcon /></ToolButton>
              </ToolGroup>
              <ToolGroup>
                <ToolButton aria-label="Tree map"><TreeMapIcon /></ToolButton>
                <ToolButton aria-label="Object map"><TreeMapIcon blob /></ToolButton>
              </ToolGroup>
              <ToolGroup $width={66} />
              <ToolGroup>
                <ToolButton aria-label="Export"><ExportIcon /></ToolButton>
              </ToolGroup>
              <ToolGroup>
                <ToolButton aria-label="Start">
                  <svg width="8" height="12" viewBox="0 0 8 12">
                    <path d="M1 0l6 6-6 6z" />
                  </svg>
                </ToolButton>
                <ToolButton aria-label="Steps"><FlowIcon /></ToolButton>
              </ToolGroup>
              <ToolGroup>
                <ToolButton aria-label="Pause task"><PauseIcon /></ToolButton>
                <ToolButton aria-label="Stop">
                  <svg width="9" height="9" viewBox="0 0 9 9">
                    <rect width="9" height="9" />
                  </svg>
                </ToolButton>
              </ToolGroup>
              <ToolGroup>
                <ToolButton aria-label="Windows"><WindowsIcon /></ToolButton>
              </ToolGroup>
              <ToolGroup>
                <ToolButton aria-label="Exit"><ExitIcon /></ToolButton>
              </ToolGroup>
            </Toolbar>
            <Panels>
              <FolderTree />
              <FileList />
            </Panels>
            <StatusBar>
              <StatusCell $size={200}>对象:29</StatusCell>
              <StatusCell $size={198}></StatusCell>
              <StatusCell $size={198}></StatusCell>
              <StatusCell $size={306}></StatusCell>
            </StatusBar>
            <SectorMap />
            <Tabs role="tablist">
              {['日志', '位图', 'HEX', '结构', '状态', '进程'].map((name) => (
                <Tab key={name} role="tab" aria-selected={name === '位图'} $active={name === '位图'}>
                  {name}
                </Tab>
              ))}
            </Tabs>
            <TabFoot />
          </Main>
          <Side>
            <SideBar>
              <SideButton aria-label="Copy disk">
                <CopyDiskIcon />
              </SideButton>
            </SideBar>
          </Side>
        </Body>
        <Indicators>
          {lampGroups.map((g) => (
            <Group key={g.title} $width={g.width} $space={g.space} $indent={g.indent} $end={g.end}>
              <legend>{g.title}</legend>
              <Lamps>
                {g.lamps.map((name, i) => (
                  <Lamp key={i}>{name}</Lamp>
                ))}
              </Lamps>
            </Group>
          ))}
        </Indicators>
      </Window>
      <Behind>
        <BehindPart $h={18} $color="#e2e2e2" />
        <BehindPart $h={54} $color="#fafafa" />
        <BehindPart $h={24} $color="#f0f0f0" />
        <BehindPart $h={29} $color="#f6f6f6" />
        <BehindPart $h={26} $color="#9db4e0" />
        <BehindPart $h={550} $color="#fbfbfb" />
        <BehindPart $h={24} $color="#e8e8ea" />
      </Behind>
      <BehindStatus>12 个项目</BehindStatus>
    </Desktop>
  </>
);

export default App;
